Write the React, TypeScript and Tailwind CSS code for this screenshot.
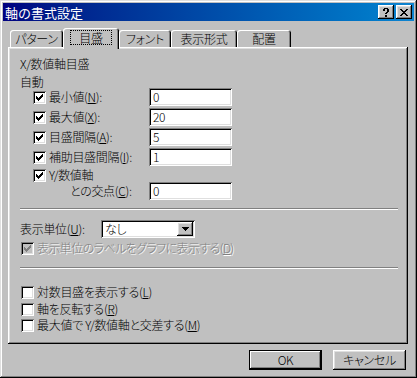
import React from 'react';

const raised =
  'shadow-[inset_-1px_-1px_#000,inset_1px_1px_#fff,inset_-2px_-2px_#808080,inset_2px_2px_#dfdfdf]';
const sunken =
  'shadow-[inset_1px_1px_#808080,inset_-1px_-1px_#fff,inset_2px_2px_#000,inset_-2px_-2px_#dfdfdf]';

const checkSpans: [number, number, number][] = [
  [6, 0, 1],
  [5, 1, 2],
  [0, 2, 1],
  [4, 2, 3],
  [0, 3, 2],
  [3, 3, 3],
  [0, 4, 5],
  [1, 5, 3],
  [2, 6, 1],
];

function Check({ checked, disabled }: { checked?: boolean; disabled?: boolean }) {
  return (
    <span
      className={`relative inline-block w-[13px] h-[13px] shrink-0 ${
        disabled ? 'bg-[#c0c0c0]' : 'bg-white'
      } ${sunken}`}
    >
      {checked && (
        <svg
          className="absolute left-[3px] top-[3px]"
          width="7"
          height="7"
          viewBox="0 0 7 7"
          shapeRendering="crispEdges"
          fill={disabled ? '#808080' : '#000'}
        >
          {checkSpans.map(([x, y, w], i) => (
            <rect key={i} x={x} y={y} width={w} height={1} />
          ))}
        </svg>
      )}
    </span>
  );
}

function Field({ value }: { value: string }) {
  return (
    <div className={`w-[83px] h-[18px] bg-white ${sunken} pl-[4px] flex items-center leading-none`}>
      {value}
    </div>
  );
}

function AutoRow({ label, value }: { label: React.ReactNode; value: string }) {
  return (
    <div className="flex items-center h-[18px] pl-[13px]">
      <div className="flex items-center w-[116px] gap-[3px]">
        <Check checked />
        <span>{label}</span>
      </div>
      <Field value={value} />
    </div>
  );
}

function Separator() {
  return <div className="ml-[12px] mr-[10px] h-[2px] border-t border-t-[#808080] border-b border-b-white" />;
}

function Tab({ label, width, active }: { label: string; width: string; active?: boolean }) {
  return (
    <div
      className={`${width} relative flex items-center justify-center bg-[#c0c0c0] rounded-t-[3px] shadow-[inset_1px_1px_#fff,inset_-1px_0_#000,inset_-2px_0_#808080] ${
        active ? 'h-[21px] z-10 -mb-[2px] pb-[2px]' : 'h-[17px]'
      }`}
    >
      {active ? (
        <span className="px-[8px] h-[15px] flex items-center border border-dotted border-black leading-none">
          {label}
        </span>
      ) : (
        <span className="leading-none">{label}</span>
      )}
    </div>
  );
}

function Button({ children, isDefault }: { children: React.ReactNode; isDefault?: boolean }) {
  return (
    <div
      className={`w-[73px] h-[20px] flex items-center justify-center bg-[#c0c0c0] ${
        isDefault
          ? 'border border-black shadow-[inset_-1px_-1px_#000,inset_1px_1px_#fff,inset_-2px_-2px_#808080]'
          : raised
      }`}
    >
      {children}
    </div>
  );
}

export default function App() {
  return (
    <div className="w-[417px] h-[378px] bg-[#c0c0c0] p-[3px] text-[12px] font-light tracking-[-0.3px] [font-feature-settings:'palt'] text-black font-['Noto_Sans_CJK_JP',sans-serif] shadow-[inset_-1px_-1px_#000,inset_1px_1px_#dfdfdf,inset_-2px_-2px_#808080,inset_2px_2px_#fff] overflow-hidden">
      {/* title bar */}
      <div className="h-[18px] flex items-center justify-between bg-gradient-to-r from-[#000080] to-[#1084d0] pl-[2px] pr-[2px]">
        <span className="text-white text-[13px] font-normal tracking-normal [font-feature-settings:normal] leading-none">
          軸の書式設定
        </span>
        <div className="flex gap-[2px]">
          <div className={`w-[16px] h-[14px] ${raised} bg-[#c0c0c0] flex items-center justify-center`}>
            <svg width="6" height="9" viewBox="0 0 6 9" shapeRendering="crispEdges" fill="#000">
              <rect x="1" y="0" width="4" height="1" />
              <rect x="0" y="1" width="2" height="2" />
              <rect x="4" y="1" width="2" height="3" />
              <rect x="3" y="4" width="2" height="1" />
              <rect x="2" y="5" width="2" height="1" />
              <rect x="2" y="7" width="2" height="2" />
            </svg>
          </div>
          <div className={`w-[16px] h-[14px] ${raised} bg-[#c0c0c0] flex items-center justify-center`}>
            <svg width="8" height="7" viewBox="0 0 8 7" shapeRendering="crispEdges" fill="#000">
              <rect x="0" y="0" width="2" height="1" />
              <rect x="6" y="0" width="2" height="1" />
              <rect x="1" y="1" width="2" height="1" />
              <rect x="5" y="1" width="2" height="1" />
              <rect x="2" y="2" width="4" height="1" />
              <rect x="3" y="3" width="2" height="1" />
              <rect x="2" y="4" width="4" height="1" />
              <rect x="1" y="5" width="2" height="1" />
              <rect x="5" y="5" width="2" height="1" />
              <rect x="0" y="6" width="2" height="1" />
              <rect x="6" y="6" width="2" height="1" />
            </svg>
          </div>
        </div>
      </div>

      {/* tabs */}
      <div className="mt-[7px] ml-[5px] h-[19px] flex items-end pl-[2px]">
        <Tab label="パターン" width="w-[53px]" />
        <Tab label="目盛" width="w-[56px]" active />
        <Tab label="フォント" width="w-[52px]" />
        <Tab label="表示形式" width="w-[66px]" />
        <Tab label="配置" width="w-[54px]" />
      </div>

      {/* panel */}
      <div className="ml-[5px] w-[400px] h-[297px] flex flex-col pt-[10px] shadow-[inset_-1px_-1px_#000,inset_1px_1px_#fff,inset_-2px_-2px_#808080,inset_2px_2px_#dfdfdf]">
        <div className="h-[14px] pl-[12px] flex items-center leading-none">X/数値軸目盛</div>
        <div className="mt-[4px] h-[13px] pl-[12px] flex items-center leading-none">自動</div>
        <div className="pl-[12px] flex flex-col gap-[2px]">
          <AutoRow label={<>最小値(<u>N</u>):</>} value="0" />
          <AutoRow label={<>最大値(<u>X</u>):</>} value="20" />
          <AutoRow label={<>目盛間隔(<u>A</u>):</>} value="5" />
          <AutoRow label={<>補助目盛間隔(<u>I</u>):</>} value="1" />
        </div>
        <div className="mt-[2px] h-[14px] pl-[25px] flex items-center gap-[3px] leading-none">
          <Check checked />
          <span>Y/数値軸</span>
        </div>
        <div className="h-[18px] pl-[12px] flex items-center">
          <span className="w-[129px] pl-[50px] leading-none">
            との交点(<u>C</u>):
          </span>
          <Field value="0" />
        </div>

        <div className="mt-[8px]">
          <Separator />
        </div>

        <div className="mt-[10px] h-[18px] pl-[12px] flex items-center">
          <span className="w-[81px] leading-none">
            表示単位(<u>U</u>):
          </span>
          <div className={`w-[94px] h-[18px] bg-white ${sunken} flex items-center justify-between pl-[4px] pr-[2px]`}>
            <span className="leading-none">なし</span>
            <div className={`w-[16px] h-[14px] bg-[#c0c0c0] ${raised} flex items-center justify-center`}>
              <svg width="7" height="4" viewBox="0 0 7 4" shapeRendering="crispEdges" fill="#000">
                <rect x="0" y="0" width="7" height="1" />
                <rect x="1" y="1" width="5" height="1" />
                <rect x="2" y="2" width="3" height="1" />
                <rect x="3" y="3" width="1" height="1" />
              </svg>
            </div>
          </div>
        </div>

        <div className="mt-[3px] h-[14px] pl-[13px] flex items-center gap-[3px] leading-none text-[#808080] [text-shadow:1px_1px_#fff]">
          <Check checked disabled />
          <span className="tracking-[-0.6px]">
            表示単位のラベルをグラフに表示する(<u>D</u>)
          </span>
        </div>

        <div className="mt-[12px]">
          <Separator />
        </div>

        <div className="mt-[16px] h-[14px] pl-[13px] flex items-center gap-[3px] leading-none">
          <Check />
          <span>
            対数目盛を表示する(<u>L</u>)
          </span>
        </div>
        <div className="mt-[3px] h-[14px] pl-[13px] flex items-center gap-[3px] leading-none">
          <Check />
          <span>
            軸を反転する(<u>R</u>)
          </span>
        </div>
        <div className="mt-[2px] h-[14px] pl-[13px] flex items-center gap-[3px] leading-none">
          <Check />
          <span>
            最大値で Y/数値軸と交差する(<u>M</u>)
          </span>
        </div>
      </div>

      {/* buttons */}
      <div className="mt-[6px] ml-[5px] w-[400px] flex justify-end gap-[11px] pr-[2px]">
        <Button isDefault>OK</Button>
        <Button>キャンセル</Button>
      </div>
    </div>
  );
}
